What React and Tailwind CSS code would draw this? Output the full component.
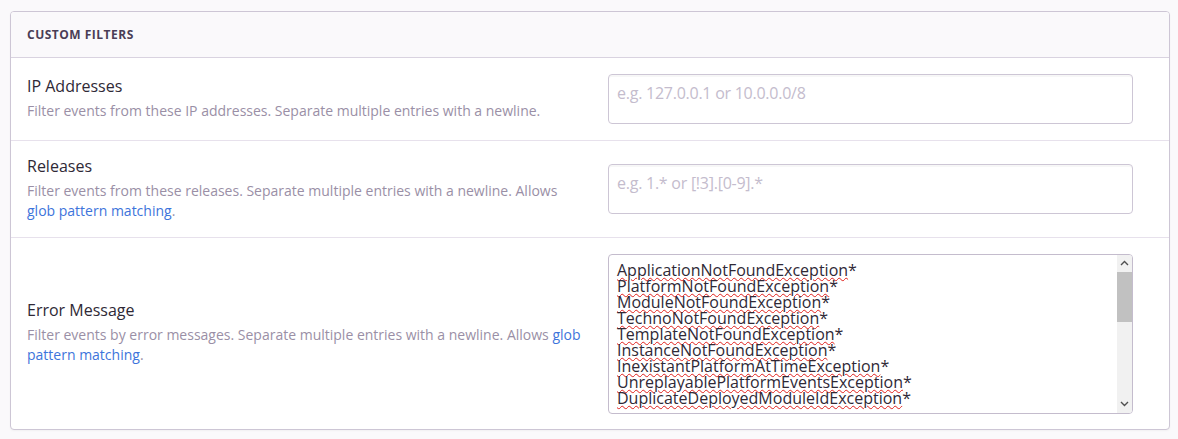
// Panneau "Custom Filters" — filtres entrants d'un projet
const FONT = { fontFamily: '"Open Sans", "Noto Sans", sans-serif' };

const ERROR_PATTERNS = [
  "ApplicationNotFoundException",
  "PlatformNotFoundException",
  "ModuleNotFoundException",
  "TechnoNotFoundException",
  "TemplateNotFoundException",
  "InstanceNotFoundException",
  "InexistantPlatformAtTimeException",
  "UnreplayablePlatformEventsException",
  "DuplicateDeployedModuleIdException",
];

function GlobLink() {
  return <a className="text-[#3d74db] no-underline">glob pattern matching</a>;
}

function FieldLabel({ label, children }) {
  return (
    <div className="w-[579px] shrink-0 pl-4 pr-[5px] mb-[2px]">
      <div className="text-[16px] leading-5 text-[#2f2936]">{label}</div>
      <div className="mt-[5px] text-[14px] leading-5 text-[#9a8fa6]">{children}</div>
    </div>
  );
}

function Placeholder({ text }) {
  return (
    <div className="h-[50px] w-full rounded-[4px] border border-[#cdc6d5] bg-white shadow-[inset_0_2px_0_rgba(0,0,0,0.03)] px-2 py-2">
      <div className="text-[16px] leading-5 tracking-[-0.25px] text-[#c4bccd]">{text}</div>
    </div>
  );
}

function Chevron({ up }) {
  return (
    <svg width="9" height="6" viewBox="0 0 9 6" className="block">
      <path
        d={up ? "M1 5 L4.5 1.5 L8 5" : "M1 1 L4.5 4.5 L8 1"}
        fill="none"
        stroke="#505050"
        strokeWidth="1.4"
      />
    </svg>
  );
}

function FakeScrollbar() {
  return (
    <div className="w-[15px] shrink-0 bg-[#f1f1f1] flex flex-col">
      <div className="h-[17px] flex items-center justify-center">
        <Chevron up />
      </div>
      <div className="h-[50px] bg-[#c1c1c1]" />
      <div className="flex-1" />
      <div className="h-[17px] flex items-center justify-center">
        <Chevron />
      </div>
    </div>
  );
}

function ErrorTextarea() {
  return (
    <div className="h-[160px] w-full rounded-[4px] border border-[#c4bccd] bg-white flex overflow-hidden">
      <div className="flex-1 overflow-hidden pl-2 pt-[7px] text-[16px] leading-4 text-[#2f2936]">
        {ERROR_PATTERNS.map((p) => (
          <div key={p} className="whitespace-nowrap">
            <span className="underline decoration-wavy decoration-[#e0201c] decoration-1 underline-offset-[1px]">{p}</span>*
          </div>
        ))}
      </div>
      <FakeScrollbar />
    </div>
  );
}

export default function App() {
  return (
    <div className="w-[1178px] h-[439px] bg-[#faf9fb] pt-[11px] pl-[10px]" style={FONT}>
      <div className="w-[1160px] rounded-[4px] border border-[#cdc6d5] bg-white overflow-hidden shadow-[0_1px_2px_rgba(0,0,0,0.04)]">
        {/* En-tête */}
        <div className="h-[46px] flex items-center px-4 bg-[#faf9fb] border-b border-[#d9d3e0]">
          <span className="text-[12px] font-bold uppercase tracking-[0.5px] text-[#4a3e56]">Custom Filters</span>
        </div>

        {/* Adresses IP */}
        <div className="h-[83px] flex items-center border-b border-[#e7e1ec]">
          <FieldLabel label="IP Addresses">
            Filter events from these IP addresses. Separate multiple entries with a newline.
          </FieldLabel>
          <div className="flex-1 pl-[18px] pr-[36px]">
            <Placeholder text="e.g. 127.0.0.1 or 10.0.0.0/8" />
          </div>
        </div>

        {/* Releases */}
        <div className="h-[97px] flex items-center border-b border-[#e7e1ec]">
          <FieldLabel label="Releases">
            Filter events from these releases. Separate multiple entries with a newline. Allows{" "}
            <GlobLink />.
          </FieldLabel>
          <div className="flex-1 pl-[18px] pr-[36px]">
            <Placeholder text="e.g. 1.* or [!3].[0-9].*" />
          </div>
        </div>

        {/* Message d'erreur */}
        <div className="h-[191px] flex items-center">
          <FieldLabel label="Error Message">
            Filter events by error messages. Separate multiple entries with a newline. Allows{" "}
            <GlobLink />.
          </FieldLabel>
          <div className="flex-1 pl-[18px] pr-[36px]">
            <ErrorTextarea />
          </div>
        </div>
      </div>
    </div>
  );
}
